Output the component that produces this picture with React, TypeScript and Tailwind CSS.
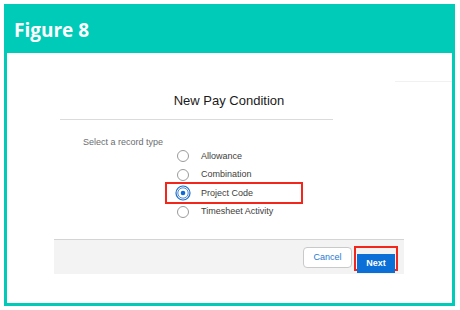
const TEAL = 'bg-[#00cbb8]'

const options = ['Allowance', 'Combination', 'Project Code', 'Timesheet Activity']

function Radio({ checked }: { checked: boolean }) {
    if (checked) {
        return (
            <svg width="16" height="16" viewBox="0 0 16 16" className="-mx-[2px] flex-shrink-0">
                <circle cx="8" cy="8" r="7" fill="white" stroke="#1b6fd1" strokeWidth="1.2" />
                <circle cx="8" cy="8" r="5.2" fill="white" stroke="#4f86cc" strokeWidth="1" />
                <circle cx="8" cy="8" r="2.3" fill="#0b6bd6" />
            </svg>
        )
    }
    return (
        <svg width="12" height="12" viewBox="0 0 12 12" className="flex-shrink-0">
            <circle cx="6" cy="6" r="5.5" fill="white" stroke="#9a9a9a" strokeWidth="1" />
        </svg>
    )
}

export default function App() {
    return (
        <div className="w-[460px] h-[310px] bg-white pt-[4px] pl-[4px] pr-[5px] pb-[4px] font-['Liberation_Sans',Arial,sans-serif]">
            <div className={`flex flex-col w-[451px] h-[302px] ${TEAL} px-[3px] pb-[3px]`}>
                {/* ── Header ── */}
                <div className="h-[49px] flex items-center pl-[7px] pt-[3px]">
                    <span className="font-['Open_Sans',sans-serif] font-bold text-[19px] text-white">Figure 8</span>
                </div>

                {/* ── Screenshot area ── */}
                <div className="flex-1 bg-white flex flex-col">
                    <div className="flex justify-end mt-[28px]">
                        <div className="w-[57px] h-px bg-[#f1f1f1]" />
                    </div>

                    <div className="ml-[47px] w-[350px] flex flex-col">
                        <div className="mt-[9px] text-center text-[13px] leading-[20px] text-[#1a1a1a]">New Pay Condition</div>
                        <div className="mt-[8px] ml-[6px] w-[273px] h-px bg-[#dddbda]" />

                        <div className="mt-[15px] pl-[29px] text-[9px] leading-[14px] text-[#6b6d70]">Select a record type</div>

                        <div className="-mt-[2px] pl-[123px] flex flex-col">
                            {options.map((o, i) => (
                                <div key={o} className="relative h-[18.5px] flex items-center gap-[12px]">
                                    <Radio checked={i === 2} />
                                    <span className="text-[9px] text-[#3e3e3c]">{o}</span>
                                    {i === 2 && (
                                        <span className="absolute left-[-12px] top-1/2 -translate-y-1/2 w-[138px] h-[22px] border-2 border-[#f2261b]" />
                                    )}
                                </div>
                            ))}
                        </div>

                        {/* ── Footer ── */}
                        <div className="mt-[18px] h-[35px] border-t border-[#d4d4d4] bg-[#f3f3f3] flex items-center justify-end gap-[2px] pr-[6px] pt-[1px]">
                            <button type="button" className="w-[49px] h-[21px] rounded-[4px] border border-[#c9c9c9] bg-white text-[9px] text-[#1f79d4]">
                                Cancel
                            </button>
                            <div className="w-[44px] h-[25px] border-2 border-[#f2261b] p-px mt-[2px]">
                                <button type="button" className="w-full h-full bg-[#0a6fd6] text-[9px] font-bold text-white">
                                    Next
                                </button>
                            </div>
                        </div>
                    </div>
                </div>
            </div>
        </div>
    )
}
